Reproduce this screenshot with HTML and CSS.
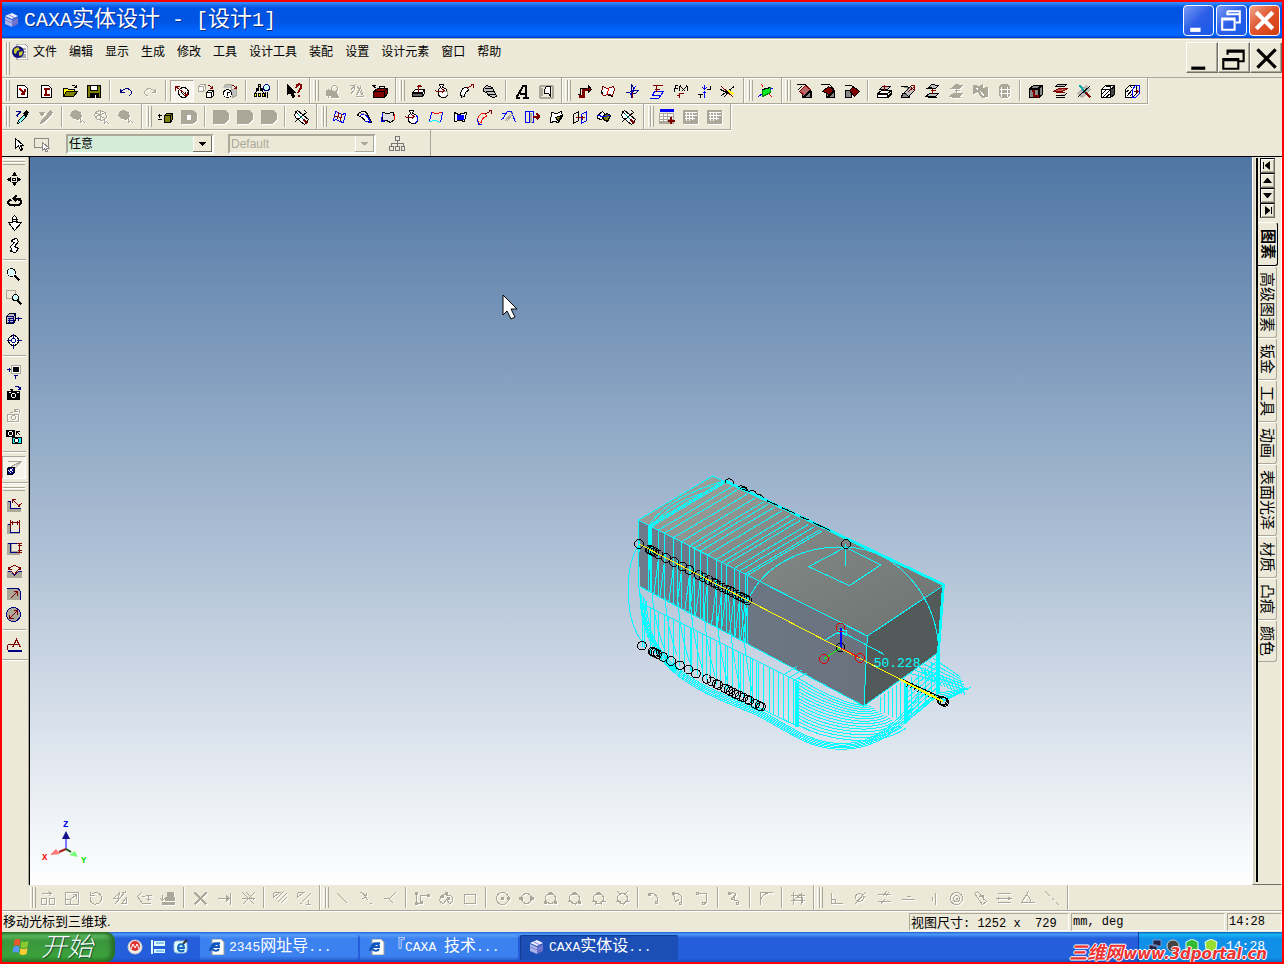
FILE: index.html
```
<!DOCTYPE html>
<html lang="zh-CN">
  <head>
    <meta charset="utf-8" />
    <title>CAXA实体设计 - [设计1]</title>
    <link rel="stylesheet" href="styles.css" />
  </head>
  <body>
    <header class="titlebar">
      <svg class="logo" viewBox="0 0 16 16"><path d="M1 4l7-3 6 3-6 3z" fill="#eef" /><path d="M1 5l7 3v7l-7-3z" fill="#aab4e8" /><path d="M8 8l6-3v7l-6 3z" fill="#6a70c8" /><path d="M1 8l7 3 6-3M5 3l6 3" stroke="#7a80d8" fill="none" /></svg>
      <h1><span class="latin">CAXA</span>实体设计<span class="latin"> - [</span>设计<span class="latin">1]</span></h1>
      <div class="captions">
        <button class="caption" aria-label="最小化"><svg viewBox="0 0 28 28"><path d="M6 21h10v4H6z" fill="#fff" /></svg></button>
        <button class="caption" aria-label="还原"><svg viewBox="0 0 28 28"><path d="M10 5h12v11h-4M10 5v3h11" stroke="#fff" stroke-width="2" fill="none" /><path d="M5 12h12v11H5zM5 13h12" stroke="#fff" stroke-width="2" fill="none" /></svg></button>
        <button class="caption close" aria-label="关闭"><svg viewBox="0 0 28 28"><path d="M6 6l16 16M22 6L6 22" stroke="#fff" stroke-width="4" fill="none" /></svg></button>
      </div>
    </header>

    <nav class="menubar">
      <span class="grip"></span>
      <svg class="doc" viewBox="0 0 16 16"><path d="M5 0h8l3 3v13H5z" fill="#fff" stroke="#888" /><path d="M9 5h5M9 8h5M9 11h5M8 13h6" stroke="#555" /><circle cx="6" cy="8" r="6" fill="#12127c" /><path d="M2 5l4-2 2 3-3 1-1 3-2-1zM7 8l4-1-1 4-3 1z" fill="#cc3" /></svg>
      <button>文件</button><button>编辑</button><button>显示</button><button>生成</button><button>修改</button><button>工具</button><button>设计工具</button><button>装配</button><button>设置</button><button>设计元素</button><button>窗口</button><button>帮助</button>
      <div class="mdi">
        <button aria-label="最小化文档"><svg viewBox="0 0 28 28"><path d="M4 22h13v3H4z" /></svg></button>
        <button aria-label="还原文档"><svg viewBox="0 0 28 28"><path d="M8 11V7h15v10h-5M8 8h15" stroke="#000" stroke-width="2" fill="none" /><path d="M4 15h14v9H4zM4 16h14" stroke="#000" stroke-width="2" fill="none" /></svg></button>
        <button aria-label="关闭文档"><svg viewBox="0 0 28 28"><path d="M6 6l17 17M23 6L6 23" stroke="#000" stroke-width="3" fill="none" /></svg></button>
      </div>
    </nav>

    <div class="band" data-tools="newDoc newPart open save | undo redo! | sphere* linkA linkB | tree | help || gearA! gearB! toolbox || extrude spin sweep loft | textA stamp || bend surfR axes planes fx split trim || plane || filA filB filC | press sweepB lift lift! gearC! cyl! | shell layers knife blockA blockB"></div>
    <div class="band band-two" data-tools="pick pickB! | blob! blob2! blob! || plusBox boxHole! | boxOff! boxOff! boxOff! | knifeBox || meshA shellA surfA spinB surfB fillS sweepR stripe exitBox surfC mirror surfD knifeBox || tableA tableB! tableB!"></div>

    <div class="selectbar">
      <button class="tool" data-icon="arrow" aria-label="选择"></button>
      <button class="tool" data-icon="boxpick" aria-label="框选"></button>
      <select class="combo" aria-label="选择过滤"><option>任意</option></select>
      <select class="combo style" aria-label="样式" disabled><option>Default</option></select>
      <button class="tool" data-icon="org" aria-label="结构"></button>
    </div>

    <main>
      <div class="leftbar">
        <div class="vgroup" data-tools="move orbit walk path | zoom zoomBox boxIn target | fit cam camB! camC | persp*"></div>
        <div class="vgroup" data-tools="dimA dimB dimC dimD dimE dimF | note"></div>
      </div>

      <section class="viewport" aria-label="视图">
        <svg class="model" viewBox="0 0 1140 900" id="model">
          <defs>
            <linearGradient id="top" x1="0" y1="0" x2="1" y2="1"><stop offset="0" stop-color="#a3aaa5" /><stop offset="0.45" stop-color="#808683" /><stop offset="1" stop-color="#6c7371" /></linearGradient>
            <linearGradient id="side" x1="0" y1="0" x2="1" y2="0"><stop offset="0" stop-color="#6d7b8b" /><stop offset="1" stop-color="#6a727d" /></linearGradient>
          </defs>
          <path d="M85 180L308 48L1003 375L772 528z" fill="url(#top)" />
          <path d="M85 180L772 528L762 738L90 380z" fill="url(#side)" />
          <path d="M772 528L1003 375L985 578L762 738z" fill="#535b5a" />
        </svg>
        <svg class="cursor" viewBox="0 0 16 26"><path d="M1 1v20l4-4 4 8 4-2-4-8h6z" fill="#fff" stroke="#000" /></svg>
        <svg class="triad" viewBox="0 0 50 50">
          <path d="M26 30v-12" stroke="#77f" stroke-width="2" /><path d="M26 12l4 8h-8z" fill="#118" />
          <path d="M26 30l-7 3" stroke="#a22" stroke-width="2" /><path d="M10 36l6-6 4 5z" fill="#f77" />
          <path d="M26 30l5 3" stroke="#151" stroke-width="2" /><path d="M38 38l-3-6-6 4z" fill="#7f7" />
          <text x="23" y="8" fill="#00f">Z</text><text x="2" y="41" fill="#f00">X</text><text x="41" y="44" fill="#0d0">Y</text>
        </svg>
      </section>

      <aside class="catalog">
        <div class="strip">
          <button class="nav" aria-label="第一页"><svg viewBox="0 0 11 11"><path d="M1 2h1v7H1zM8 1v9L3 6V5z" /></svg></button>
          <button class="nav" aria-label="上一页"><svg viewBox="0 0 11 11"><path d="M5 3h1l4 5H1z" /></svg></button>
          <button class="nav" aria-label="下一页"><svg viewBox="0 0 11 11"><path d="M1 3h9L6 8H5z" /></svg></button>
          <button class="nav" aria-label="最后一页"><svg viewBox="0 0 11 11"><path d="M9 2h1v7H9zM3 1v9l5-4V5z" /></svg></button>
          <button class="tab active">图素</button>
          <button class="tab">高级图素</button>
          <button class="tab">钣金</button>
          <button class="tab">工具</button>
          <button class="tab">动画</button>
          <button class="tab">表面光泽</button>
          <button class="tab">材质</button>
          <button class="tab">凸痕</button>
          <button class="tab">颜色</button>
        </div>
      </aside>
    </main>

    <div class="band sketch" data-tools="cMove! cScale! cRotate! cMirror! cOffset! cProject! | cTrim! cExtend! cBreak! | cHatchA! cHatchB! || lineA! lineB! lineC! | poly! arcs! rect! | circA! circB! circC! circD! circE! circF! | arcA! arcB! arcC! | spline! | fillet! | crop! || perp! tang! equal! horiz! vert! conc! paral! equalB! angle! coll!"></div>

    <footer class="status">
      <p class="message">移动光标到三维球.</p>
      <p class="pane size">视图尺寸<span class="latin">: 1252 x  729</span></p>
      <p class="pane units latin">mm, deg</p>
      <p class="pane time latin">14:28</p>
    </footer>

    <div class="taskbar">
      <button class="start">
        <svg viewBox="0 0 20 18"><path d="M3 2q3-2 6 0l-1 6q-3-2-6 0z" fill="#f0562a" /><path d="M10 3q3 2 7 0l-1 6q-4 2-7 0z" fill="#8c3" /><path d="M2 9q3-2 6 0l-1 6q-3-2-6 0z" fill="#59f" /><path d="M9 10q3 2 7 0l-1 6q-4 2-7 0z" fill="#fc3" /></svg>
        开始
      </button>
      <div class="quick">
        <button aria-label="浏览器"><svg viewBox="0 0 16 16"><circle cx="8" cy="8" r="7" fill="#eee" stroke="#ccc" /><circle cx="8" cy="7" r="5" fill="#d33" /><path d="M4 10l2-5 2 4 2-4 2 5" stroke="#fff" fill="none" /></svg></button>
        <button aria-label="桌面"><svg viewBox="0 0 16 16"><path d="M1 1h2v14H1zM4 2h11v5H4zM4 10h11v4H4z" fill="#dff" /><path d="M6 4h8M6 12h8" stroke="#38d" /></svg></button>
        <button aria-label="Internet"><svg viewBox="0 0 16 16"><rect x="1" y="2" width="13" height="12" rx="3" fill="#dff" stroke="#9bd" /><path d="M5 9h6c0-5-6-5-6 0 0 4 5 4 6 2" stroke="#16b" stroke-width="2" fill="none" /><path d="M10 5l4-4" stroke="#333" stroke-width="2" /></svg></button>
      </div>
      <button class="task">
        <svg viewBox="0 0 16 16"><path d="M3 0h9l3 3v13H3z" fill="#fff" stroke="#999" /><path d="M3 8h7c0-5-7-5-7 0 0 5 6 4 7 2M1 12q0-6 10-8" stroke="#15b" stroke-width="2" fill="none" /></svg>
        <span><span class="latin">2345</span>网址导<span class="latin">...</span></span>
      </button>
      <button class="task">
        <svg viewBox="0 0 16 16"><path d="M3 0h9l3 3v13H3z" fill="#fff" stroke="#999" /><path d="M3 8h7c0-5-7-5-7 0 0 5 6 4 7 2M1 12q0-6 10-8" stroke="#15b" stroke-width="2" fill="none" /></svg>
        <span>『<span class="latin">CAXA </span>技术<span class="latin">...</span></span>
      </button>
      <button class="task current">
        <svg viewBox="0 0 16 16"><path d="M1 4l7-3 6 3-6 3z" fill="#eef" /><path d="M1 5l7 3v7l-7-3z" fill="#aab4e8" /><path d="M8 8l6-3v7l-6 3z" fill="#6a70c8" /><path d="M1 8l7 3 6-3M5 3l6 3" stroke="#7a80d8" fill="none" /></svg>
        <span><span class="latin">CAXA</span>实体设<span class="latin">...</span></span>
      </button>
      <div class="tray">
        <svg viewBox="0 0 70 16"><path d="M5 1h8v6H5zM1 6h8v6H1z" fill="#224" stroke="#79c" /><circle cx="25" cy="7" r="6" fill="#444" stroke="#ccc" /><path d="M38 3l6-3 6 3v7l-6 4-6-4z" fill="#3b3" stroke="#efe" /><path d="M57 3l6-3 6 3-1 7-5 4-5-4z" fill="#9d3" stroke="#efe" /></svg>
        <span class="latin">14:28</span>
      </div>
      <p class="watermark">三维网<span>www.3dportal.cn</span></p>
    </div>
    <script src="app.js"></script>
  </body>
</html>
```
FILE: styles.css
```
* {
  margin: 0;
  box-sizing: border-box;
}
body {
  min-height: 100vh;
  display: flex;
  flex-direction: column;
  border: 2px solid #f00;
  background-color: #ece9d8;
  font: 12px/16px "Liberation Sans", "Noto Sans CJK SC", sans-serif;
  color: #000;
  overflow: hidden;
}
button {
  padding: 0;
  border: 0;
  background: none;
  font: inherit;
  color: inherit;
}
svg {
  display: block;
}
.latin {
  font-family: "Liberation Mono", "Noto Sans CJK SC", monospace;
  white-space: pre;
}

/* title bar */
.titlebar {
  height: 36px;
  display: flex;
  align-items: center;
  padding: 0 2px;
  background: linear-gradient(#3a90ff, #0054e3 16%, #0054e3 55%, #0066ff 82%, #0066ff 92%, #003dd0);
}
.logo {
  width: 16px;
  height: 16px;
}
.titlebar h1 {
  flex: 1;
  margin-left: 4px;
  font-size: 22px;
  line-height: 32px;
  font-weight: 400;
  color: #fff;
  text-shadow: 1px 1px 0 #0a2a8c;
}
.titlebar .latin {
  font-size: 20px;
}
.captions {
  display: flex;
  gap: 2px;
}
.caption {
  width: 31px;
  height: 31px;
  border: 1px solid #fff;
  border-radius: 4px;
  background: linear-gradient(135deg, #7a9cf4, #2b5de8 50%, #1a5be8);
}
.close {
  background: linear-gradient(135deg, #f0a58c, #e0512b 50%, #d23c10);
}

/* menu */
.menubar {
  height: 40px;
  display: flex;
  align-items: flex-start;
  padding: 3px 0 0 2px;
  border-top: 1px solid #aca899;
  border-bottom: 1px solid #aca899;
  box-shadow: inset 0 1px 0 #fff;
}
.menubar > button {
  padding: 2px 6px;
  line-height: 16px;
}
.grip {
  width: 6px;
  flex: none;
  align-self: stretch;
  background: linear-gradient(90deg, #fff 1px, #ece9d8 1px, #ece9d8 2px, #aca899 2px, #aca899 3px, #fff 3px, #fff 4px, #ece9d8 4px, #ece9d8 5px, #aca899 5px);
}
.menubar .grip {
  height: 33px;
}
.doc {
  width: 16px;
  height: 16px;
  margin: 2px 0 0 2px;
  margin-right: -1px;
}
.mdi {
  display: flex;
  margin-left: auto;
}
.mdi button {
  width: 32px;
  height: 31px;
  border: 1px solid;
  border-color: #fff #716f64 #716f64 #fff;
  box-shadow: inset -1px -1px 0 #aca899;
}

/* tool bands */
.band {
  display: flex;
  align-self: flex-start;
  height: 26px;
  padding-left: 2px;
  border-bottom: 1px solid #aca899;
  box-shadow: inset 0 1px 0 #fff, 0 1px 0 #fff;
}
.group {
  display: flex;
  align-items: center;
  padding: 2px 3px 2px 0;
  border-right: 1px solid #aca899;
  box-shadow: 1px 0 0 #fff;
}
.group + .group {
  padding-left: 3px;
}
.band-two .group + .group {
  padding-left: 4px;
}
.group + .group .grip {
  margin-right: 1px;
}
.tool {
  width: 24px;
  height: 22px;
  flex: none;
  display: flex;
  align-items: center;
  justify-content: center;
}
.tool svg {
  width: 16px;
  height: 16px;
  shape-rendering: crispEdges;
}
.tool:disabled svg {
  filter: drop-shadow(1px 1px 0 #fff);
}
.tool.pressed {
  border: 1px solid;
  border-color: #aca899 #fff #fff #aca899;
  background-color: #f6f4ec;
}
.sep {
  width: 2px;
  flex: none;
  align-self: stretch;
  margin: 0 3px;
  border-left: 1px solid #aca899;
  border-right: 1px solid #fff;
}

.selectbar {
  width: 429px;
  height: 26px;
  display: flex;
  align-items: center;
  padding: 1px 0 0 4px;
  border-right: 1px solid #aca899;
}
.combo {
  width: 148px;
  height: 20px;
  margin: 0 14px 0 12px;
  padding: 0 1px;
  appearance: none;
  border: 2px solid;
  border-color: #aca899 #fff #fff #aca899;
  border-radius: 0;
  color: #000;
  font: inherit;
  background: linear-gradient(#000, #000) no-repeat right 6px top 6px / 7px 1px,
    linear-gradient(#000, #000) no-repeat right 7px top 7px / 5px 1px,
    linear-gradient(#000, #000) no-repeat right 8px top 8px / 3px 1px,
    linear-gradient(#000, #000) no-repeat right 9px top 9px / 1px 1px,
    linear-gradient(#716f64, #716f64) no-repeat right bottom / 19px 1px,
    linear-gradient(#716f64, #716f64) no-repeat right top / 1px 16px,
    linear-gradient(#fff, #fff) no-repeat right 18px top / 1px 16px,
    linear-gradient(#ece9d8, #ece9d8) no-repeat right top / 19px 16px,
    #d4ecd8;
}
.combo.style {
  margin-left: 0;
  margin-right: 9px;
  color: #aca899;
  opacity: 1;
  background: linear-gradient(#aca899, #aca899) no-repeat right 6px top 6px / 7px 1px,
    linear-gradient(#aca899, #aca899) no-repeat right 7px top 7px / 5px 1px,
    linear-gradient(#aca899, #aca899) no-repeat right 8px top 8px / 3px 1px,
    linear-gradient(#aca899, #aca899) no-repeat right bottom / 19px 1px,
    linear-gradient(#aca899, #aca899) no-repeat right top / 1px 16px,
    linear-gradient(#fff, #fff) no-repeat right 18px top / 1px 16px,
    #ece9d8;
}

/* work area */
main {
  flex: 1;
  display: flex;
  border-top: 1px solid #000;
}
.leftbar {
  width: 27px;
  border-right: 1px solid #aca899;
}
.vgroup {
  display: flex;
  flex-direction: column;
  align-items: center;
  padding: 2px 2px 3px 0;
  border-bottom: 1px solid #aca899;
  box-shadow: 0 1px 0 #fff;
}
.vgroup .grip {
  width: 22px;
  height: 6px;
  align-self: center;
  margin: 0 0 3px;
  background: linear-gradient(#fff 1px, #ece9d8 1px, #ece9d8 2px, #aca899 2px, #aca899 3px, #fff 3px, #fff 4px, #ece9d8 4px, #ece9d8 5px, #aca899 5px);
}
.vgroup .sep {
  width: 23px;
  height: 2px;
  align-self: center;
  margin: 3px 0 3px;
  border: 0;
  border-top: 1px solid #aca899;
  border-bottom: 1px solid #fff;
}
.vgroup .pressed {
  height: 23px;
}
.viewport {
  flex: 1;
  position: relative;
  overflow: hidden;
  border-left: 1px solid #000;
  background: linear-gradient(#4f76a4, #fff);
}
.model {
  position: absolute;
  left: 580px;
  top: 303px;
  width: 380px;
  height: 300px;
  shape-rendering: crispEdges;
}
.model text {
  font: 39px "Liberation Mono", monospace;
  fill: #0ff;
}
.cursor {
  position: absolute;
  left: 472px;
  top: 137px;
  width: 16px;
  height: 26px;
}
.triad {
  position: absolute;
  left: 10px;
  bottom: 16px;
  width: 50px;
  height: 50px;
}
.triad text {
  font: bold 9px "Liberation Mono", monospace;
}

.catalog {
  width: 30px;
  padding: 1px 4px 2px 3px;
  border-left: 1px solid #fff;
  border-right: 1px solid #fff;
  border-bottom: 1px solid #716f64;
  box-shadow: inset 2px 0 0 #d8d4c4;
}
.strip {
  height: 100%;
  display: flex;
  flex-direction: column;
  border-left: 2px solid #000;
}
.nav {
  width: 15px;
  height: 15px;
  margin-left: 2px;
  border: 1px solid;
  border-color: #000 #716f64 #716f64 #000;
  box-shadow: inset 1px 1px 0 #fff, inset -1px -1px 0 #aca899;
  padding: 1px;
}
.nav:nth-child(4) {
  margin-bottom: 4px;
}
.tab {
  width: 19px;
  padding: 5px 0;
  border: 1px solid #aca899;
  border-width: 0 1px 1px 0;
  border-top: 1px solid #fff;
  border-radius: 0 3px 3px 0;
  writing-mode: vertical-rl;
  text-orientation: sideways;
  text-align: center;
  font-size: 15px;
  line-height: 18px;
}
.tab.active {
  width: 20px;
  padding: 6px 0;
  border-right-color: #000;
  border-bottom-color: #000;
  font-weight: 700;
}

.band.sketch {
  align-self: stretch;
  padding-left: 28px;
  box-shadow: 0 1px 0 #fff;
}

/* status bar */
.status {
  height: 21px;
  display: flex;
  gap: 2px;
  align-items: center;
  font-size: 13px;
  line-height: 17px;
}
.message {
  flex: 1;
  padding-left: 1px;
}
.status .latin {
  font-size: 12px;
}
.pane {
  height: 18px;
  padding-left: 1px;
  border: 1px solid;
  border-color: #aca899 #fff #fff #aca899;
}
.size {
  width: 160px;
}
.units {
  width: 154px;
}
.time {
  width: 55px;
}

/* taskbar */
.taskbar {
  position: relative;
  height: 30px;
  display: flex;
  align-items: center;
  background: linear-gradient(#2a62d8, #4a9af8 8%, #245edb 20%, #245edb 85%, #1d4fc0);
  color: #fff;
  font-size: 16px;
}
.start {
  width: 113px;
  height: 30px;
  display: flex;
  align-items: center;
  gap: 9px;
  padding-left: 9px;
  border-radius: 0 9px 9px 0;
  background: linear-gradient(#2d7a2d, #5cb85c 12%, #3c963c 30%, #3ba23b 80%, #2c802c);
  box-shadow: inset -4px 0 5px #256b25;
  font-size: 26px;
  line-height: 30px;
  font-style: italic;
  font-weight: 300;
  text-shadow: 1px 1px 1px #143;
}
.start svg {
  width: 21px;
  height: 18px;
}
.quick {
  display: flex;
  gap: 7px;
  margin: 0 11px 0 12px;
}
.quick svg,
.task svg {
  width: 16px;
  height: 16px;
}
.task {
  width: 158px;
  height: 25px;
  display: flex;
  align-items: center;
  gap: 4px;
  margin-right: 2px;
  padding-left: 9px;
  border-radius: 2px;
  background: linear-gradient(#5a9cf8, #3c81f0 15%, #3c81f0 85%, #2a63d0);
}
.task .latin {
  font-size: 13px;
}
.task.current {
  background: #1c4fb5;
  box-shadow: inset 1px 1px 1px #123a8a;
}
.tray {
  height: 30px;
  width: 144px;
  display: flex;
  align-items: center;
  gap: 8px;
  margin-left: auto;
  padding-left: 9px;
  border-left: 1px solid #0a3aa8;
  background: linear-gradient(#0c59b9, #18b6f5 8%, #0f8fe8 22%, #1290e8 85%, #0b6fd0);
}
.tray svg {
  width: 70px;
  height: 16px;
}
.tray .latin {
  font-size: 13px;
}
.watermark {
  position: absolute;
  right: 15px;
  top: 9px;
  font: italic 700 18px/20px "Noto Sans CJK SC", sans-serif;
  color: #e33;
  text-shadow: 1px 0 0 #fff, -1px 0 0 #fff, 0 1px 0 #fff, 0 -1px 0 #fff;
}
.watermark span {
  font: italic 700 15px/20px "DejaVu Sans", sans-serif;
}
```
FILE: app.js
```
const K = "#000", R = "#800000", B = "#00f", N = "#000080", W = "#fff";
const G = "#aca899", O = "#808000", C = "#0ff", S = "#c0c0c0", E = "#f00";

const circle = (x, y, r) => `M${x - r} ${y}a${r} ${r} 0 1 0 ${2 * r} 0a${r} ${r} 0 1 0 ${-2 * r} 0`;
const page = ["M3 2h7l3 3v9H3z", K, W];

// each icon is a list of [path, stroke, fill, width] on a 16px grid
const icons = {
  newDoc: [page, ["M5 5l4 4M11 6l-2 4M6 10h4", R, "none", 2], ["M5 5l3 1", E]],
  newPart: [page, ["M5 5h6M5 6h6M8 6v6M5 11h6M5 12h6", R], ["M7 6v6", R]],
  open: [["M1 13V5h4l1 1h6v3", K, "#ff0"], ["M1 13l3-5h11l-4 5z", K, O], ["M9 3c1-2 3-2 5 1M14 1v3h-3", K]],
  save: [["M1 2h13v12H1z", K, O], ["M4 2h7v5H4z", K, W], ["M4 10h8v4H4z", K, K], ["M9 11v3", W]],
  undo: [["M2 5v4h4M2 9c3-5 10-5 11 0c0 2-2 3-3 3", N]],
  redo: [["M13 5v4h-4M13 9c-3-5-10-5-11 0c0 2 2 3 3 3", G]],
  sphere: [[circle(9, 9, 5), K], ["M7 9c1 2 3 2 4 0", K], ["M1 3h4M1 3v4M1 3l12 9M13 12v-4M13 12h-4", R]],
  linkA: [["M0 3l2-2h5v5l-2 2H0zM0 3h5v5M5 3l2-2", G, W], ["M8 9l2-2h5v5l-2 2H8zM8 9h5v5M13 9l2-2", K, W], ["M9 2h2l3 3M14 2v3h-3", R]],
  linkB: [["M1 4l2-3h6v4M9 6l5-1v7l-4 2z", G, S], [circle(5, 10, 4), K, W], ["M5 9v3M4 9h3", K], ["M9 2h2l3 3M14 2v3h-3", R]],
  tree: [["M4 1h2v2H4zM2 5h2v2H2zM6 5h2v2H6zM0 10h2v3H0zM4 10h2v3H4zM8 10h2v3H8zM4 3L1 10M6 3l3 7", K, "#ff0"], [circle(12, 4, 3), N, "#cff"], ["M13 8v6M11 13V8", K]],
  help: [["M1 1v10l3-2 2 5 2-1-2-4h3z", K, K], ["M10 4c0-4 5-4 5-1 0 3-3 3-3 6M12 11v2", R, "none", 2]],
  gearA: [["M2 7h5v5H2zM1 9h8M4 5v9", G, G], [circle(10, 5, 3), G], ["M7 14l2-6h2l3 6z", G, G]],
  gearB: [["M1 2h5v4M2 7l5-6M8 12l4-8 3 9H7M9 3l5 9", G], ["M2 11l4-5", G]],
  gearC: [["M1 2l6 1 3-2v4l5-1v9l-5 1-5-6-4 2z", G, G], ["M8 8l4 5M4 5l2 1", W]],
  toolbox: [["M1 8l4-3h10v5l-3 4H1z", K, R], ["M1 8h11v6M12 8l3-3", K], ["M7 5V3h5v2", K], ["M0 2l4 3M0 2h3", K]],
  extrude: [["M2 9l3-3h9l-2 3v4H2zM2 9h10v4M12 9l2-3v4l-2 3", K, W], ["M2 10h10v3H2z", K, "#666"], ["M8 8V1M6 3h5M7 2h3", R]],
  spin: [["M5 1h4l-1 3c6 1 7 10 1 10-6 0-7-7-3-10z", K, W], ["M9 8h4v3l-3 3", G], ["M1 7c2 2 5 2 9 0M7 5l3 2-3 3", R]],
  spinB: [["M5 1h4l-1 3c6 1 7 10 1 10-6 0-7-7-3-10z", K, W], ["M12 6c3 4 0 8-3 8", B], ["M1 7c2 2 5 2 9 0M7 5l3 2-3 3", R]],
  sweep: [["M2 10c1-5 4-7 7-6l1 3c-3 1-4 3-4 6l-3 1z", K, W], ["M9 4l5-2M12 1h3v3", R], ["M4 11v3", G]],
  loft: [["M1 5l3-3 6 2 4 9-3 1-5-2-2-3-3-1z", K, S], ["M2 5h7M3 8h8M5 11h7", K]],
  textA: [["M2 14l7-12h2v12M5 10h6M1 14h4M8 14h6", K, "none", 2]],
  stamp: [["M1 2h13M1 14h13M1 2v12M14 2v12M3 4v8", G, "none", 2], ["M8 3h4v10l-2-3H6V6z", K, W]],
  bend: [["M2 13h5V6h5", R, "none", 3], ["M12 2l3 4-3 3z", K, R], ["M1 11h3V5h6", K]],
  surfR: [["M2 3l5 2 6-2 1 3-2 6-4-1-5 1-2-2z", R, W], ["M8 5l-1 6", E], ["M2 11l-1-4M8 12l5 1", K]],
  axes: [["M7 1v13M7 1l2 3v4M1 9h4l3-2h6l-3 3H6", N], ["M5 12l6-9", B], ["M8 8v6", R]],
  planes: [["M4 12l2-4h9l-3 4z", B], ["M1 15h9l3-4", B], ["M4 2h10M8 2v6M6 6h5", R]],
  fx: [["M2 9l1-7h2M1 5h4M8 2c-2 3-1 5 0 6M9 4l4 4M13 4l-4 4M14 2c2 3 1 5 0 6", K], ["M7 9v5M4 12h3M7 10h4", R]],
  split: [["M1 11h3v3M1 11h5M10 6h4V2", K], ["M8 1v5M8 14V8M6 4l2 2 2-2M6 10l2-2 2 2", B]],
  trim: [["M1 3l12 11", R], ["M3 14L13 3M1 12l13-9", K], ["M8 7l5 4", "#ff0", "none", 2], ["M0 6l6 3", K]],
  plane: [["M4 6l8-2v5l-8 4z", "#080", "#0e2"], ["M3 1l2 3M11 11l3 3", E], ["M0 13l4-3M12 6l3-2", B], ["M4 6l8-2", K]],
  filA: [["M6 8h8v6H6z", K, "#888"], ["M0 1h9l6 7v6M1 7l4-4", K], ["M3 8l6-6 5 4-6 6z", R, "#b66"], ["M7 14L14 7", K, "none", 2]],
  filB: [["M6 8h8v6H6z", K, "#888"], ["M0 1h9l6 7", K], ["M2 8l6-5 6 4-5 4z", K, R], ["M7 14L14 7", K, "none", 2]],
  filC: [["M1 7h6v7H1z", K, "#888"], ["M5 7l4-4 6 5-5 5z", K, R], ["M0 2h7l3 3", K]],
  press: [["M1 10l4-3h10l-4 3v4H1z", K, W], ["M1 10h10M11 14l4-4V7", K, "none", 2], ["M3 6l3-3h8l-3 3z", K, S], ["M8 7V1M6 3h5", R]],
  sweepB: [["M0 3h7l3 3M2 10h7v4H1z", K, "#888"], ["M4 9l6-6 4 4-6 6z", K, S], ["M8 8l6-5M14 7V2h-4", R]],
  lift: [["M4 4l3-3 7 1-3 3zM1 13l4-3h9l-3 3z", K, S], ["M1 5h8M3 14h9", K], ["M8 10V5M6 7h5", R]],
  cyl: [["M3 3c2-3 8-3 10 0v9c-2 3-8 3-10 0z", G, G], ["M5 3v10M11 3v10M3 6h10M3 10h10", W]],
  shell: [["M1 5l4-3h9v9l-4 3H1z", K, "#888"], ["M1 5h9v9M10 5l4-3", K, "none", 2], ["M3 7h2v5h4v2", R, "none", 2]],
  layers: [["M3 3l2-2h9l-2 2zM3 12h9l2-2M3 14h9", K, S], ["M1 8l5-3h9l-5 3zM3 9h9", R, "#b55"]],
  knife: [["M1 10l9-8 4 4-8 8z", G, S], ["M8 8l6 6", R, "none", 2], ["M3 2l6 7", "#0aa", "none", 2], ["M14 2L2 13", K]],
  blockA: [["M1 6l4-4h9v8l-4 4H1z", K, W], ["M1 6h9v8M10 6l4-4", K], ["M5 3h5v5M2 14l8-8M1 11l5-5M5 14l5-4", K], ["M10 6l4-3v8l-4 3z", K, "#444"]],
  blockB: [["M1 6l4-4h7v8l-4 4H1z", K, W], ["M2 13l6-7M1 9l4-3M5 2l3 3M5 13l3-3", K], ["M8 6l3-4h4v8l-4 4H8z", B], ["M9 8h5M12 6l2 2-2 2", R]],

  pick: [["M1 2h5l-4 6M2 6L7 2", N], ["M3 14l1-3 6-6 2 2-6 6z", K, "#8ff"], ["M9 4l3-3 2 2-3 4z", K, K]],
  pickB: [["M2 14l1-3 6-6 2 2-6 6zM9 4l3-3 2 2-3 4zM6 3H1l3 4", G, G]],
  blob: [["M1 3l4-2 5 2 1 4-3 3-5-1-3-3z", G, G], ["M10 7v6l2-2 3 3", G, W]],
  blob2: [["M1 3l4-2 6 2 1 5-4 3-5-1-3-4zM1 3l9 6M1 7l10-4M6 1v9", G], ["M10 8v6l2-2 3 3", G, W]],
  plusBox: [["M0 6h4M2 4v4M0 10h4", K], ["M7 6l2-2h6v6l-2 3H7z", K, O], ["M7 6h6v6M13 6l2-2", K]],
  boxHole: [["M0 1h11l4 3v7l-4 3H0z", G, G], ["M6 6h3v4H6z", W, W]],
  boxOff: [["M0 1h12l3 3v6l-4 4H0z", G, G]],
  knifeBox: [["M1 5l3-4 11 9-4 5-9-7z", K, W], ["M2 12L13 3M11 1l3 3M2 2l12 12", K], ["M10 10l4 4", R, "none", 2], ["M5 5l5 5", "#0aa"]],
  meshA: [["M3 2L1 11l3-1 3 2 4 1 2-9-4 1-3-2z", B], ["M6 3L5 10M2 7l8 1M9 5L8 12", R]],
  shellA: [["M1 6c2-5 9-5 10-1l4 8-6-1C7 8 4 7 1 6z", K, W], ["M4 6c4-3 7 0 10 7M9 12l5 1", B], ["M3 4l8 1", G]],
  surfA: [["M2 3l5 1 6-1 1 7-4 3-4-2-4 1z", K, "#ddd"], ["M2 4l-1 8 4-1", B], ["M14 4v6", E]],
  surfB: [["M3 3l5 1 6-1", E], ["M3 3l-2 9", B], ["M1 12l6-1 5 2", C], ["M14 3l-2 10", B]],
  fillS: [["M2 3l4 2 8-2-2 9-4-1-6 1z", K, W], ["M5 6h6v4H5z", B, B]],
  sweepR: [["M1 10c1-5 4-7 8-6l1 3c-4 1-5 3-5 6l-3 1z", E], ["M1 10l1 5h3", B], ["M9 4l5-2M12 1h3v3", R]],
  stripe: [["M1 10c3-1 4-7 6-8h4l4 11", B], ["M4 12l8-9M6 12l6-7", G], ["M1 4h5", B]],
  exitBox: [["M1 2h8v11H1zM5 2v11", B], ["M6 3v10", G, "none", 2], ["M8 7h7M12 4l3 3-3 3", R, "none", 2]],
  surfC: [["M3 3l5 1 5-2 1 5-4 6-4-1-4 1z", K, W], ["M7 8l6-2-3 6z", K, O]],
  mirror: [["M1 5l5-3v9l-5 3z", K], ["M9 5l5-3v9l-5 3z", B], ["M3 8h9M10 6v4", R]],
  surfD: [["M1 6l5-4 3 3-4 5-4-1z", K, W], ["M7 6l4-2 3 2-3 6-4-2z", K, O], ["M1 6l6 1 7-1", B]],
  tableA: [["M0 4h14v10H0z", G, W], ["M0 7h14M0 10h14M4 4v10M8 4v10", G], ["M0 13h14", G, "none", 3], ["M0 1h14", B, "none", 3], ["M11 7v7M8 11h7", R, "none", 2]],
  tableB: [["M0 1h14v13H0z", G, G], ["M1 3h12M1 6h12M1 9h10M3 2v9M6 2v9M9 2v8", W]],

  arrow: [["M5 2v10l3-3 2 5 2-1-2-4h3z", K, W]],
  boxpick: [["M0 2h14v9H0z", "#888"], ["M8 6v8l2-2 2 4 1-1-1-3h3z", "#888", W]],
  org: [["M6 0h4v4H6zM0 10h4v4H0zM6 10h4v4H6zM12 10h3v4h-3zM8 4v6M2 10V7h12v3", "#777"]],

  move: [["M8 1l2 3H6zM8 14l2-3H6zM1 8l3-2v4zM14 8l-3-2v4z", K, K], ["M6 7h3v2H6z", K]],
  orbit: [["M5 6C0 7 0 12 8 12s8-5 4-6M8 5h6M10 2L7 5l3 3", K, "none", 2]],
  walk: [["M6 7V2l2-2 2 2v5h5l-7 8-6-8z", K, W], ["M5 4h6M5 6h6", K]],
  path: [["M6 2l4-1 2 3-4 5 4 2-3 4-5-1 1-2-1-3 4-4-3-1z", K, W]],
  zoom: [[circle(5, 5, 4), K, "#dff"], ["M8 8l5 5", K, "none", 2]],
  zoomBox: [["M0 1h9v8H0z", G], [circle(9, 8, 3), K, "#cff"], ["M11 11l4 4", K, "none", 2]],
  boxIn: [["M0 5l3-3h6v6l-2 4H0z", K, S], ["M0 5h7v7M7 5l2-3M1 7h5M1 9h5M1 11h5M3 6v6", N], ["M9 7h6M12 5v4", N]],
  target: [[circle(7, 7, 5), K, W], [circle(7, 7, 2), N], ["M7 0v5M7 10v5M0 7h5M10 7h5", N]],
  fit: [["M5 2h9v8H5z", G, W], ["M7 4h5v4H7z", K, K], ["M0 6h4M3 4v4M9 15v-4M7 12h4", N]],
  cam: [["M1 6h12v8H1zM3 4h3v2", K, K], [circle(7, 10, 2), W, K], ["M2 7h2M10 7h2", W], ["M8 2c2-2 5-1 6 2M14 1v3h-3", N]],
  camB: [["M1 7h11v7H1zM3 5h3", G], [circle(7, 10, 2), G], ["M13 6c2-4-2-5-5-3M8 1v3h3", G]],
  camC: [["M0 1h8v6H0z", K, K], [circle(4, 4, 2), W], ["M6 8h9v6H6z", K, C], [circle(10, 11, 2), K, W], ["M10 2l4 4M10 2h3M10 2v3", K]],
  persp: [["M1 8l2-1h5v5l-2 2H1z", K, N], ["M2 10l3 3M2 12l4-4M4 9l3 3", W], ["M1 1h14L8 8M5 6l10-5", G]],
  dimA: [["M1 4h3v7h10v3H1z", G, G], ["M1 4h3v7h10", N], ["M6 2l7 7M6 2v3M6 2h3M13 9v-3M11 10l4-4", R]],
  dimB: [["M1 5h3v8h9v1H1z", G, G], ["M1 5h3v8h9V4", N], ["M4 0v9M13 0v9M4 3h9M6 1v4M11 1v4", R]],
  dimC: [["M1 2h4v8h8v3H1z", G, G], ["M1 2h13M4 2v9h9", N], ["M10 2h5M10 11h5M13 2v9M11 4h4M11 9h4", R]],
  dimD: [["M1 8h4l3 3 4-3h3v6H1z", G, G], ["M1 8h4l3 4 4-4h3", N], ["M2 6c3-5 9-5 12 0M2 3v3h3M14 3v3h-3M5 8l3 3 3-4", R]],
  dimE: [["M1 3h10l3 3v8H1z", G, G], ["M0 3h10c3 0 4 2 4 5v6", N], ["M4 13l7-7M11 10V6H7", R]],
  dimF: [[circle(7, 7, 7), N, G], ["M3 11l8-8M3 7v4h4M11 7V3H7", R]],
  note: [["M1 13h14", N, "none", 2], ["M6 10l4-8 4 8M8 7h5M1 7h5M1 7v5", R]],

  cMove: [["M1 8h5v6H1zM9 8h5v6H9zM1 3h9M8 1l3 2-3 3", G]],
  cScale: [["M1 2h13v12H1zM1 9h5v5M6 9l6-5M8 4h4v4", G]],
  cRotate: [["M3 4c6-6 14 3 8 8-5 4-10 0-9-5M2 1v4h4", G]],
  cMirror: [["M1 8h5l1-6zM9 13h5V7zM2 14L13 1M9 2h4", G]],
  cOffset: [["M1 6l4-4M1 6l5 7h8M5 6h3M9 5h6M12 5v5M10 9h4", G]],
  cProject: [["M7 2h6v5H7zM5 7h9v3H5zM2 12h12v2H2z", G, G], ["M2 4v6M0 8l2 2 2-2", G]],
  cTrim: [["M2 2l12 12M14 2L2 14", G, "none", 2]],
  cExtend: [["M1 8h8M10 5l3 3-3 3zM14 2v12", G, G]],
  cBreak: [["M2 2l12 12M14 2L2 14M6 2l8 8M1 8h13", G]],
  cHatchA: [["M1 2h7M1 2v5l6-5M5 12l9-9M3 9l8-8M8 13l6-6", G]],
  cHatchB: [["M1 2h7M1 2v5l6-5M5 12l9-9M12 9v5M9 14h5M3 13h2", G]],
  lineA: [["M3 3l10 10", G]],
  lineB: [["M1 2c7 0 5 6 9 8M3 8c3 0 5-2 5-6M11 13h2", G]],
  lineC: [["M1 8h6l6-6M7 8v1l4 4", G]],
  poly: [["M2 2v11M2 13h4V5h7", G], ["M1 2h2v2H1zM13 4h2v2h-2zM1 12h2v2H1zM6 11h2v2H6z", G, G]],
  arcs: [["M6 4c-6 2-6 8-1 9l3-4 3 4c5-2 4-8-1-8z", G], ["M7 2h2v2H7zM3 5h2v2H3zM9 7h2v2H9z", G, G]],
  rect: [["M2 4h11v9H2z", G]],
  circA: [[circle(8, 8, 6), G], ["M7 7h2v2H7zM13 7h2v2h-2z", G, G]],
  circB: [[circle(8, 8, 5), G], ["M1 7h3v2H1zM12 7h3v2h-3z", G, G]],
  circC: [[circle(8, 8, 5), G], ["M7 2h2v2H7zM2 11h2v2H2zM12 11h2v2h-2z", G, G]],
  circD: [[circle(8, 8, 5), G], ["M7 2h2v2H7zM12 11h2v2h-2zM1 11h4M7 13h2v1", G, G]],
  circE: [[circle(8, 8, 5), G], ["M7 2h2v2H7z", G, G], ["M1 11h5M10 11h5M5 11v3M11 11v3", G]],
  circF: [[circle(8, 8, 5), G], ["M3 1l3 3M13 1l-3 3M1 11h5M10 11h5M7 13h2v1", G]],
  arcA: [["M3 4c6-3 10 4 7 8M2 3h2v2H2zM9 11h2v2H9z", G]],
  arcB: [["M3 3c6-1 11 4 7 9M2 2h2v2H2zM9 12h2v2H9zM3 4l2 7 4-2", G]],
  arcC: [["M3 3h9v7c0 2-1 3-3 3M2 2h2v2H2zM8 12h2v2H8z", G]],
  spline: [["M3 3c8-2 7 2 2 5 0 3 6 0 8 4M2 2h2v2H2zM6 7h2v2H6zM10 12h2v2h-2z", G]],
  fillet: [["M2 14V2h12M2 11c0-4 3-7 8-9", G]],
  crop: [["M0 5h14M3 1v13M11 3v11M0 10h14M3 10l9-8M6 7h6v5", G]],
  perp: [["M3 2v11h11M3 9h4v4", G]],
  tang: [[circle(7, 7, 4), G], ["M2 14L13 2M7 12l6-6", G]],
  equal: [["M1 4h13M1 11h13M6 6l4-5M4 14l4-5M9 6l3-4", G]],
  horiz: [["M1 9h13M6 6h4", G]],
  vert: [["M11 2v12M8 6v4", G]],
  conc: [[circle(8, 8, 6), G], [circle(8, 8, 3), G], ["M7 8h2", G, "none", 2]],
  paral: [["M2 3l3-2 9 10-4 3zM7 6l4-1v4", G]],
  equalB: [["M1 3h13M1 8h13M1 12h13M3 7l-2 1 2 1M12 7l2 1-2 1", G]],
  angle: [["M8 1L1 12h13M7 5c3 2 3 4 3 7", G]],
  coll: [["M1 1l5 5M8 8l2 2M12 12l3 3", G]],
};

function draw(button, name) {
  const paths = icons[name]
    .map(([d, stroke, fill = "none", width = 1]) => {
      if (button.disabled) {
        stroke = stroke === W ? W : G;
        fill = fill === "none" ? fill : fill === W ? W : G;
      }
      return `<path d="${d}" stroke="${stroke}" fill="${fill}" stroke-width="${width}"/>`;
    })
    .join("");
  button.innerHTML = `<svg viewBox="0 0 16 16"><g transform="translate(.5 .5)">${paths}</g></svg>`;
}

// "!" marks a disabled tool, "*" a pressed one, "|" a separator, "||" a new bar
function fillBar(bar) {
  bar.dataset.tools.split(" || ").forEach((list) => {
    let group = bar;
    if (bar.classList.contains("band")) {
      group = document.createElement("div");
      group.className = "group";
      bar.appendChild(group);
    }
    const grip = document.createElement("span");
    grip.className = "grip";
    group.appendChild(grip);
    list.split(" ").forEach((item) => {
      if (item === "|") {
        const sep = document.createElement("span");
        sep.className = "sep";
        group.appendChild(sep);
        return;
      }
      const name = item.replace(/[!*]/, "");
      const btn = document.createElement("button");
      btn.className = item.endsWith("*") ? "tool pressed" : "tool";
      btn.disabled = item.endsWith("!");
      btn.setAttribute("aria-label", name);
      draw(btn, name);
      group.appendChild(btn);
    });
  });
}

document.querySelectorAll("[data-tools]").forEach(fillBar);
document.querySelectorAll("[data-icon]").forEach((b) => draw(b, b.dataset.icon));

// wireframe over the shaded block
function wireframe() {
  let cyan = "";
  let black = "";
  const line = (x1, y1, x2, y2) => (cyan += `M${x1} ${y1}L${x2} ${y2}`);
  const front = (x) => 180 + (x - 85) * 0.507;
  const bottom = (x) => 380 + (x - 90) * 0.533;

  cyan += "M85 180L308 48L1003 375L772 528zM85 180V380M772 528L762 738L985 578L1003 375M412 345V550";
  const cuts = [116, 120, 124, 145, 163, 190, 214, 238, 252, 270, 292, 318, 335, 348, 372, 388, 405, 412];
  cuts.forEach((x, i) => {
    line(x, front(x), x + 223, front(x) - 132);
    line(x, front(x), x, bottom(x));
    if (i > 2) line(x, front(x) + 90, x - 14, bottom(x) - 4);
  });
  cyan += "M120 190Q180 110 345 62M130 200Q170 130 300 92";
  cyan += "M90 380L762 738M95 430L565 665V800L440 740M120 440V590";
  [96, 104, 120, 133, 146, 162, 175, 190, 208, 222, 240, 244, 262, 276, 290, 300, 320, 332, 345, 352, 368, 384, 392, 400, 420, 426, 440, 446, 460, 478, 490, 505, 520, 535, 550, 558].forEach((x) =>
    line(x, 432 + (x - 95) * 0.5, x, 560 + (x - 96) * 0.51)
  );
  for (let i = 0; i < 9; i++) {
    const x = 90 + i * 38;
    cyan += `M${x} ${front(x) + 60}Q${x - 20 + i * 3} ${bottom(x) + 30} ${x + 35} ${bottom(x) + 165}`;
  }
  // sweep under the block
  for (let i = 0; i < 15; i++) {
    cyan += `M565 ${655 + i * 10}C${605 + i * 2} ${680 + i * 11} ${720 + i * 5} ${745 + i * 9} ${775 + i * 8} ${735 + i * 5}`;
  }
  for (let i = 0; i < 5; i++) {
    cyan += `M${90 + i * 5} ${400 + i * 6}C${90 + i * 4} ${650 - i * 6} 300 ${705 - i * 5} 440 ${765 - i * 5}C560 ${830 - i * 5} 600 ${868 - i * 5} 700 ${868 - i * 4}C800 ${866 - i * 5} 850 ${820 - i * 5} ${985 - i * 12} ${705 - i * 3}`;
  }
  cyan += "M85 255C40 330 45 480 98 548";
  cyan += "M412 425C470 290 620 255 708 262C870 262 990 430 985 578";
  cyan += "M596 320L706 262L812 315L718 377zM706 252V318M645 540L705 505M685 510L822 583M680 510h30v18zM680 520h26";
  cyan += "M520 645L560 620M535 655L575 630M550 662L590 640";
  // right end
  for (let i = 0; i < 7; i++) {
    line(810 + i * 12, 710 - i * 9, 810 + i * 12, 755 + i * 5);
    line(893, 680 + i * 16, 985, 600 + i * 16);
  }
  for (let i = 0; i < 12; i++) {
    line(930 + i * 11, 622 + i * 4, 955 + i * 10, 662 + i * 4);
  }
  for (let i = 0; i < 6; i++) {
    line(985, 700 + i * 6, 1083 - i * 10, 683 + i * 5);
    line(900 + i * 14, 640 - i * 9, 1070 - i * 4, 690 - i * 8);
  }
  cyan += "M885 670V790L985 700V578M892 665V785M980 580V705M556 665V795M903 650V775M925 640V752M945 625V735M965 610V718";

  const circles = (xs, slope, x0, y0) =>
    xs.forEach((x) => (black += circle(x, Math.round(y0 + (x - x0) * slope), 13)));
  circles([87, 118, 123, 128, 134, 146, 168, 192, 217, 238, 266, 280, 296, 310, 316, 326, 338, 350, 358, 366, 380, 390, 398, 405, 413], 0.517, 87, 252);
  circles([128, 132, 136, 142, 160, 183, 210, 235, 258, 290, 304, 320, 325, 345, 355, 362, 372, 380, 390, 400, 412, 418, 436, 448, 453], 0.51, 125, 573);
  circles([96], 0, 96, 557);
  circles([996, 999, 1003], 0.5, 1000, 724);
  black += circle(708, 252, 13) + circle(692, 563, 13) + "M345 68a13 13 0 0 1 26 3";
  black += "M383 82q10-10 28 2M390 85q12-8 24 6M395 88l20 4M415 95q20-8 26 8M440 105q14-4 20 8M470 122l35 15M515 143l20 8M535 152l20 8M570 170l26 10M610 188l50 23";
  for (let i = 0; i < 9; i++) black += `M${878 + i * 13} ${658 + i * 6}l14 8M${890 + i * 11} ${680 + i * 5}l8-12`;

  document.getElementById("model").insertAdjacentHTML(
    "beforeend",
    `<g fill="none" stroke-width="3">
      <path d="${cyan}" stroke="#0ff"/>
      <path d="M345 62L1003 375M1000 378L985 580M120 195V330M560 670V800M890 680V785M985 580V700" stroke="#0ff" stroke-width="8"/>
      <path d="${black}" stroke="#000"/>
      <path d="M87 252L1000 725" stroke="#ff0"/><path d="M880 663L1000 725" stroke="#ff0" stroke-width="6"/>
      <path d="M692 503V563" stroke="#00f" stroke-width="6"/><path d="M692 563L642 597" stroke="#0f0"/><path d="M692 563L750 594" stroke="#f00"/>
      <path d="${circle(692, 503, 13)}${circle(642, 597, 13)}${circle(750, 594, 13)}" stroke="#d00"/>
    </g><text x="791" y="621">50.228</text>`
  );
}
wireframe();
```
